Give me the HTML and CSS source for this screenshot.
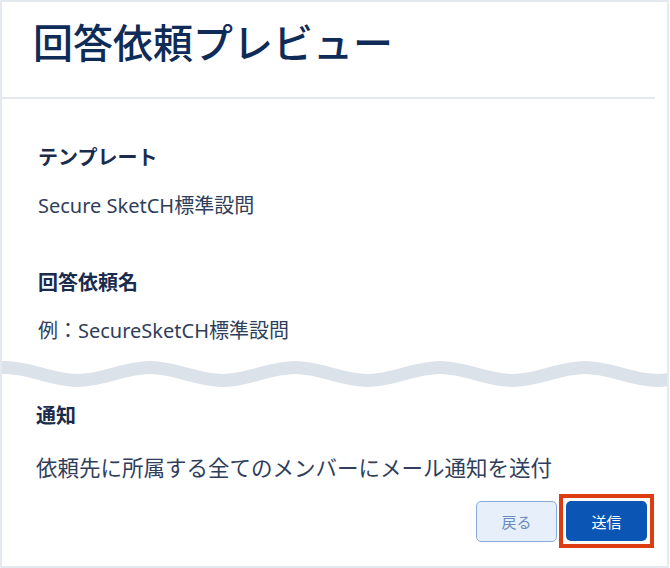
FILE: index.html
```html
<!DOCTYPE html>
<html lang="ja">
<head>
<meta charset="utf-8">
<title>回答依頼プレビュー</title>
<link rel="stylesheet" href="styles.css">
</head>
<body>
<div class="frame">
  <header class="header">
    <h1 class="title">回答依頼プレビュー</h1>
  </header>
  <section class="content">
    <div class="label first">テンプレート</div>
    <div class="value">Secure SketCH標準設問</div>
    <div class="label second">回答依頼名</div>
    <div class="value">例：SecureSketCH標準設問</div>
  </section>
  <svg class="wave" viewBox="0 0 669 44" width="669" height="44" aria-hidden="true">
    <path d="M-140,17.5 C-113.6,17.5 -93.9,30.5 -67.5,30.5 S-21.4,17.5 5,17.5 S51.1,30.5 77.5,30.5 S123.6,17.5 150,17.5 S196.1,30.5 222.5,30.5 S268.6,17.5 295,17.5 S341.1,30.5 367.5,30.5 S413.6,17.5 440,17.5 S486.1,30.5 512.5,30.5 S558.6,17.5 585,17.5 S631.1,30.5 657.5,30.5 S703.6,17.5 730,17.5" fill="none" stroke="#dce2ea" stroke-width="13"/>
  </svg>
  <section class="notify">
    <div class="label">通知</div>
    <div class="notify-text">依頼先に所属する全てのメンバーにメール通知を送付</div>
    <div class="actions">
      <button class="btn btn-back" type="button">戻る</button>
      <span class="highlight"><button class="btn btn-send" type="button">送信</button></span>
    </div>
  </section>
</div>
</body>
</html>
```

FILE: styles.css
```css
* { box-sizing: border-box; }

html, body {
  margin: 0;
  padding: 0;
  background: #ffffff;
}

body {
  font-family: "Noto Sans", "Noto Sans CJK JP", sans-serif;
  color: #34435e;
}

.frame {
  width: 669px;
  height: 568px;
  border: 2px solid #e4e8ef;
  background: #ffffff;
  overflow: hidden;
}

.header {
  margin-right: 12px;
  height: 97px;
  padding: 19px 0 0 31px;
  border-bottom: 2px solid #e5e8ef;
}

.title {
  margin: 0;
  font-family: "Noto Sans CJK JP", sans-serif;
  font-size: 40px;
  line-height: 40px;
  font-weight: 500;
  color: #0f2b57;
}

.content {
  padding-left: 36px;
}

.label {
  font-family: "Noto Sans CJK JP", sans-serif;
  font-size: 20px;
  line-height: 20px;
  font-weight: 700;
  color: #1a2b4c;
}

.label.first { margin-top: 48px; }
.label.second { margin-top: 56px; }

.value {
  margin-top: 29px;
  font-size: 20px;
  line-height: 20px;
  color: #2f3e5a;
}

.wave {
  display: block;
  margin: 9px 0 0 -2px;
}

.notify {
  padding-left: 34px;
}

.notify .label {
  margin-top: 11px;
}

.notify-text {
  margin-top: 31px;
  font-family: "Noto Sans CJK JP", sans-serif;
  font-size: 21.5px;
  line-height: 22px;
  color: #2f3e5a;
}

.actions {
  margin-top: 16px;
  display: flex;
  justify-content: flex-end;
  align-items: center;
  gap: 2px;
  padding-right: 13px;
}

.btn {
  font-family: "Noto Sans CJK JP", sans-serif;
  font-size: 15px;
  width: 81px;
  border-radius: 5px;
  padding: 0;
  cursor: pointer;
}

.btn-back {
  height: 41px;
  background: #e7effa;
  border: 1px solid #8aabd8;
  color: #6b8cc0;
}

.highlight {
  display: block;
  border: 4px solid #dd3b12;
  padding: 3px;
}

.btn-send {
  display: block;
  height: 40px;
  background: #0b56b4;
  border: none;
  color: #ffffff;
}
```
